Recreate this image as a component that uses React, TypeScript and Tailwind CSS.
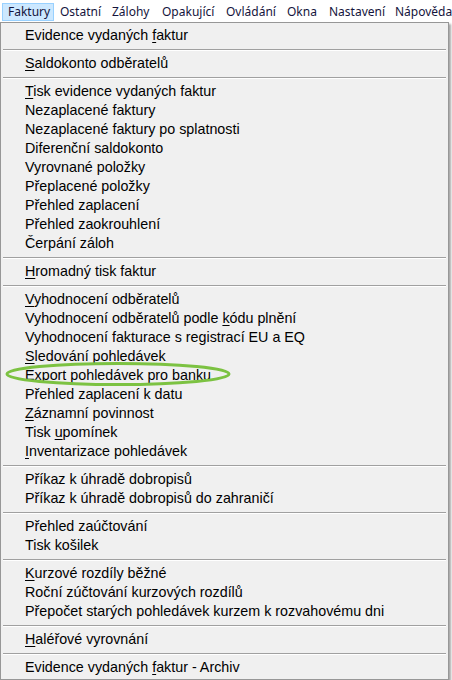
import React from 'react';

type Item = { label: string; key?: number } | 'sep';

// key = index of the underlined (mnemonic) letter
const items: Item[] = [
  { label: 'Evidence vydaných faktur', key: 18 },
  'sep',
  { label: 'Saldokonto odběratelů', key: 0 },
  'sep',
  { label: 'Tisk evidence vydaných faktur', key: 0 },
  { label: 'Nezaplacené faktury' },
  { label: 'Nezaplacené faktury po splatnosti' },
  { label: 'Diferenční saldokonto' },
  { label: 'Vyrovnané položky' },
  { label: 'Přeplacené položky' },
  { label: 'Přehled zaplacení' },
  { label: 'Přehled zaokrouhlení' },
  { label: 'Čerpání záloh' },
  'sep',
  { label: 'Hromadný tisk faktur', key: 0 },
  'sep',
  { label: 'Vyhodnocení odběratelů', key: 0 },
  { label: 'Vyhodnocení odběratelů podle kódu plnění', key: 29 },
  { label: 'Vyhodnocení fakturace s registrací EU a EQ' },
  { label: 'Sledování pohledávek', key: 0 },
  { label: 'Export pohledávek pro banku' },
  { label: 'Přehled zaplacení k datu' },
  { label: 'Záznamní povinnost', key: 0 },
  { label: 'Tisk upomínek', key: 5 },
  { label: 'Inventarizace pohledávek', key: 0 },
  'sep',
  { label: 'Příkaz k úhradě dobropisů' },
  { label: 'Příkaz k úhradě dobropisů do zahraničí' },
  'sep',
  { label: 'Přehled zaúčtování' },
  { label: 'Tisk košilek' },
  'sep',
  { label: 'Kurzové rozdíly běžné', key: 0 },
  { label: 'Roční zúčtování kurzových rozdílů' },
  { label: 'Přepočet starých pohledávek kurzem k rozvahovému dni' },
  'sep',
  { label: 'Haléřové vyrovnání', key: 0 },
  'sep',
  { label: 'Evidence vydaných faktur - Archiv', key: 18 },
];

const menus = [
  { label: 'Faktury', w: 'w-[52px]', active: true },
  { label: 'Ostatní', w: 'w-[52px]' },
  { label: 'Zálohy', w: 'w-[50px]' },
  { label: 'Opakující', w: 'w-[64px]' },
  { label: 'Ovládání', w: 'w-[61px]' },
  { label: 'Okna', w: 'w-[42px]' },
  { label: 'Nastavení', w: 'w-[66px]' },
  { label: 'Nápověda', w: 'w-[63px]' },
];

function Label({ label, k }: { label: string; k?: number }) {
  if (k === undefined) return <span>{label}</span>;
  return (
    <span>
      {label.slice(0, k)}
      <span className="underline underline-offset-2">{label[k]}</span>
      {label.slice(k + 1)}
    </span>
  );
}

export default function App() {
  return (
    <div className="w-[452px] h-[680px] bg-white overflow-hidden relative">
      {/* Menu bar */}
      <div className="flex h-[22px] pl-[2px] pt-[3px] text-[12px] text-[#14143c] font-['Noto_Sans',sans-serif]">
        {menus.map((m) => (
          <div
            key={m.label}
            className={`${m.w} h-[18px] pl-[5px] flex items-center leading-none ${
              m.active ? 'bg-[#cce8ff] border border-[#99d1ff]' : 'border border-transparent'
            }`}
          >
            {m.label}
          </div>
        ))}
      </div>

      {/* Dropdown */}
      <div className="w-[449px] bg-[#f0f0f0] border border-[#979797] pt-[3px] pb-[2px] shadow-[2px_2px_2px_rgba(0,0,0,0.35)] font-['Liberation_Sans',Arial,sans-serif] text-[14.3px] text-black">
        {items.map((it, i) =>
          it === 'sep' ? (
            <div key={i} className="h-[9px] flex items-center px-[2px]">
              <div className="w-full border-t border-[#a0a0a0] border-b border-b-white" />
            </div>
          ) : (
            <div key={i} className="h-[19px] flex items-center pl-[24px] whitespace-nowrap leading-none">
              <Label label={it.label} k={it.key} />
            </div>
          )
        )}
      </div>

      {/* Highlight circle */}
      <svg className="absolute left-0 top-0 pointer-events-none" width="452" height="680">
        <ellipse cx="118" cy="374" rx="111" ry="10.5" fill="none" stroke="#7cc242" strokeWidth="3" />
      </svg>
    </div>
  );
}
